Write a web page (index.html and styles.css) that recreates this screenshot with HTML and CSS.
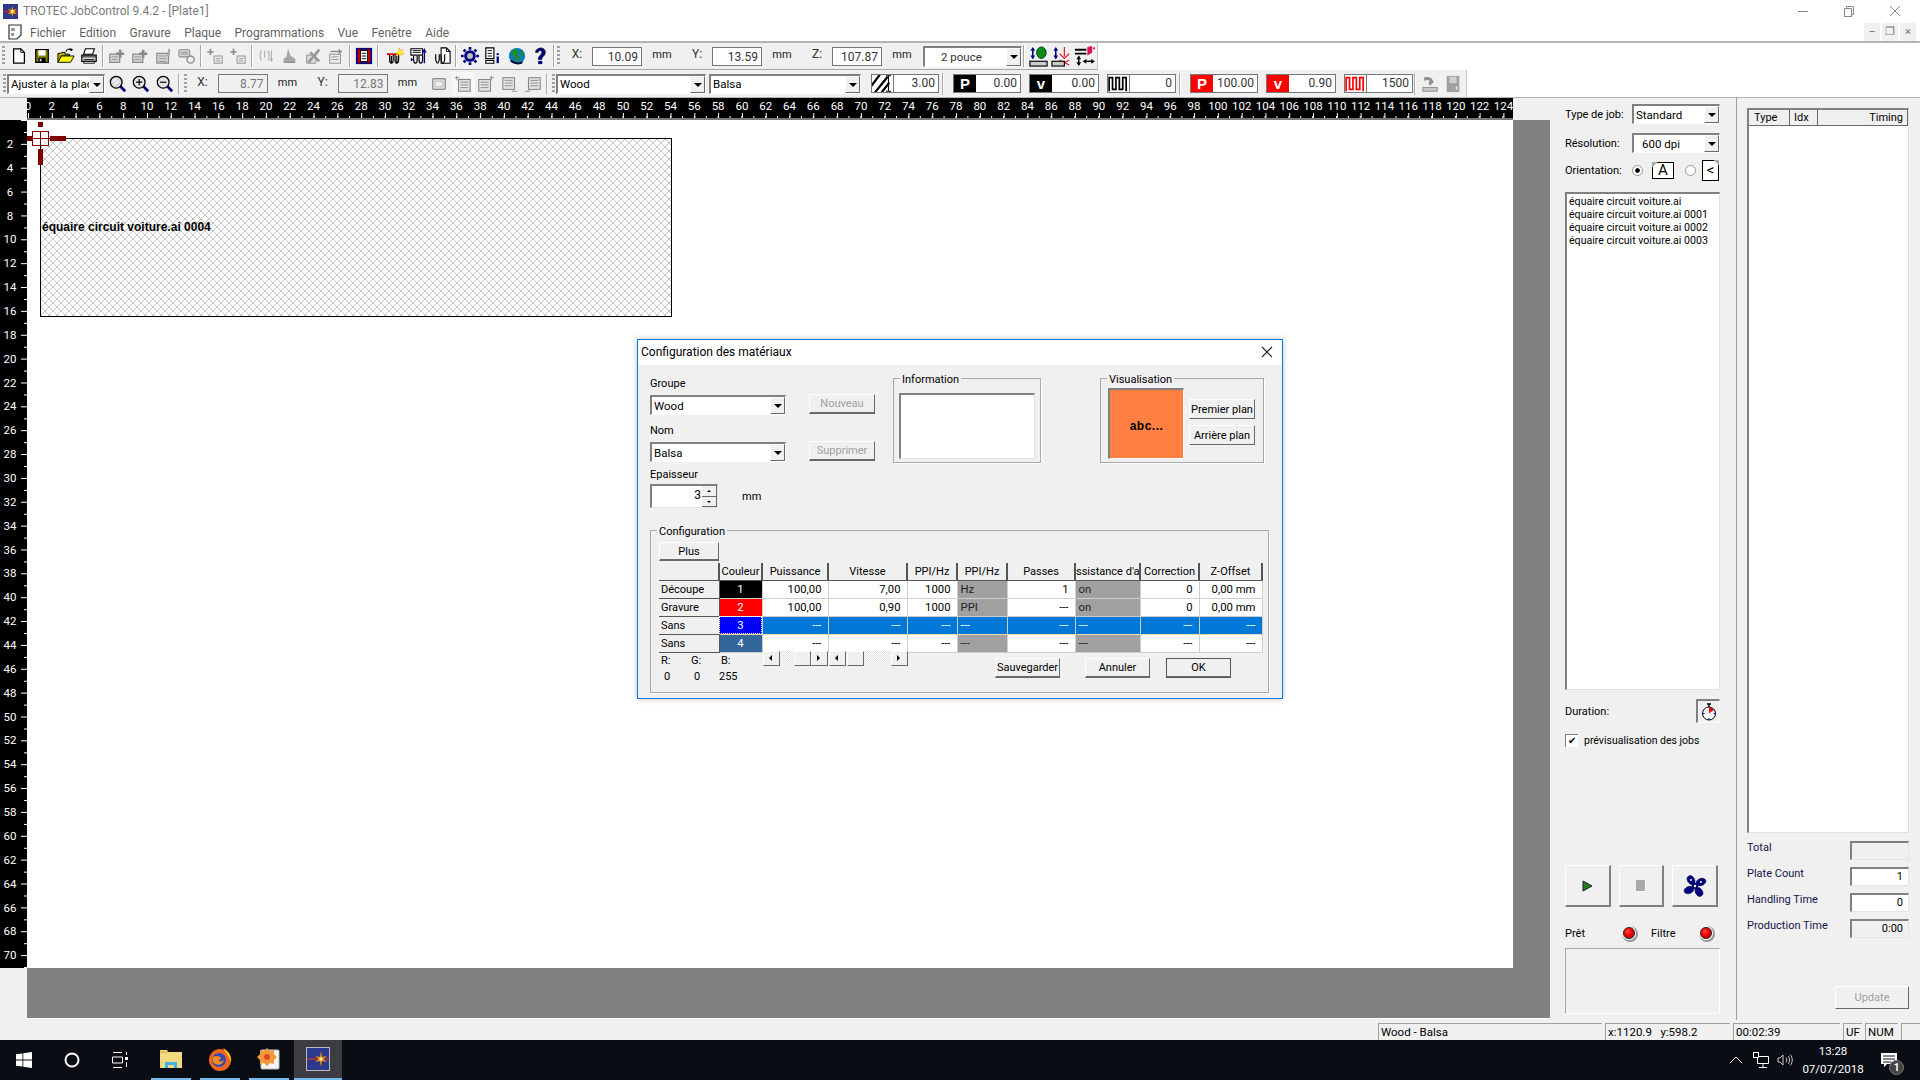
FILE: index.html
```html
<!DOCTYPE html>
<html lang="fr">
<head>
    <meta charset="UTF-8">
    <title>TROTEC JobControl 9.4.2 - [Plate1]</title>
    <link rel="stylesheet" href="styles.css">
</head>
<body>
<svg class="defs" width="0" height="0">
    <symbol id="app" viewBox="0 0 16 16"><rect width="16" height="16" fill="#2b3a8c"/><path d="M0 8h16" stroke="#c23" stroke-width="1.5"/><path d="M10 2l1 4 4-1-3 3 3 3-4-1-1 4-1-4-4 1 3-3-3-3 4 1z" fill="#f90"/><circle cx="10" cy="8" r="1.5" fill="#ff8"/></symbol>
    <symbol id="page" viewBox="0 0 20 20"><path d="M4 2h8l4 4v12H4z" fill="#fff" stroke="#000" stroke-width="1.4"/><path d="M12 2v4h4" fill="none" stroke="#000"/></symbol>
    <symbol id="save" viewBox="0 0 20 20"><path d="M3 3h14v14H3z" fill="#808000" stroke="#000" stroke-width="1.4"/><rect x="6" y="3.5" width="8" height="6" fill="#fff"/><rect x="6" y="12" width="8" height="5" fill="#000"/><rect x="7.5" y="13" width="2" height="3" fill="#ccc"/></symbol>
    <symbol id="open" viewBox="0 0 20 20"><path d="M1 17V7h3l1-1h4v2h5v2H5l-4 7z" fill="#c0a000" stroke="#000"/><path d="M1 17l4-7h14l-4 7z" fill="#ff0" stroke="#000"/><path d="M10 5c1-3 4-3 6-2" fill="none" stroke="#000" stroke-width="1.3"/><path d="M15 1l3 2-3 2z"/></symbol>
    <symbol id="print" viewBox="0 0 20 20"><path d="M6 2h10l-2 6H4z" fill="#fff" stroke="#000" stroke-width="1.2"/><path d="M2 9h16v7H2z" fill="#ddd" stroke="#000" stroke-width="1.3"/><path d="M2 11h16M4 14h12" stroke="#000"/><path d="M4 16h12v2H4z" fill="#fff" stroke="#000"/></symbol>
    <symbol id="doc-plus" viewBox="0 0 20 20"><path d="M2 8h11v9H2z" fill="#d8d8d8" stroke="#8a8a8a" stroke-width="1.4"/><path d="M4 11h7M4 14h7" stroke="#8a8a8a"/><path d="M12 3h3v3h3v3h-3v3h-3V9H9V6h3z" fill="#8a8a8a"/></symbol>
    <symbol id="doc-pen" viewBox="0 0 20 20"><path d="M2 7h13v11H2z" fill="#d8d8d8" stroke="#8a8a8a" stroke-width="1.3"/><path d="M4 10h9M4 13h9M4 16h9" stroke="#8a8a8a"/><path d="M15 1l2 2-1 7h-3z" fill="#a8a8a8"/></symbol>
    <symbol id="doc-ring" viewBox="0 0 20 20"><rect x="1" y="3" width="12" height="8" rx="2" fill="#d8d8d8" stroke="#8a8a8a" stroke-width="1.2"/><path d="M3 6h8M3 8h8" stroke="#8a8a8a"/><circle cx="14" cy="14" r="4" fill="#eee" stroke="#8a8a8a" stroke-width="1.4"/></symbol>
    <symbol id="add-list" viewBox="0 0 20 20"><path d="M5 2v7M1.500 5.500h7" stroke="#8a8a8a" stroke-width="1.800"/><rect x="9" y="10" width="9" height="8" fill="#eee" stroke="#8a8a8a"/><path d="M11 13h5M11 15.500h5" stroke="#8a8a8a"/></symbol>
    <symbol id="focus-off" viewBox="0 0 20 20"><path d="M5 4c-2 3-2 8 0 11M12 4c2 3 2 8 0 11M8.500 4v8M16 4v11" fill="none" stroke="#aaa" stroke-width="1.200"/><path d="M14 13l2 4 2-4z" fill="#aaa"/></symbol>
    <symbol id="weight" viewBox="0 0 20 20"><path d="M9 2l3 8 5 3v4H4v-4l3-2z" fill="#a8a8a8"/><path d="M4 17h13" stroke="#777"/></symbol>
    <symbol id="cross-doc" viewBox="0 0 20 20"><path d="M3 9h10v9H3z" fill="#ddd" stroke="#8a8a8a"/><path d="M5 17L17 3M7 6l10 10" stroke="#999" stroke-width="3"/></symbol>
    <symbol id="arrow-doc" viewBox="0 0 20 20"><rect x="3" y="8" width="12" height="10" fill="#eee" stroke="#8a8a8a"/><path d="M5 11h8M5 14h8" stroke="#8a8a8a"/><path d="M4 5h10" stroke="#8a8a8a" stroke-width="1.500"/><path d="M13 2l4 3-4 3z" fill="#8a8a8a"/></symbol>
    <symbol id="frame" viewBox="0 0 20 20"><rect x="1" y="1" width="18" height="18" fill="#000080"/><rect x="3" y="3" width="14" height="14" fill="#c00"/><rect x="6" y="4" width="8" height="12" fill="#fff" stroke="#000"/><path d="M7.500 7h5M7.500 10h5M7.500 13h5" stroke="#000"/></symbol>
    <symbol id="laser" viewBox="0 0 20 20"><path d="M1 8h13" stroke="#c00" stroke-width="2"/><path d="M4 9v5c0 2 1 4 2 4s2-2 2-4V9M6 10v8M10 9v5c0 2 1 4 2 4s2-2 2-4V9M12 10v8" fill="none" stroke="#000" stroke-width="1.300"/><path d="M15 1l1 3 3-1-2 3 3 2-4 0-1 3-1-3-3 0 3-3z" fill="#ff0" stroke="#f80" stroke-width=".5"/></symbol>
    <symbol id="laser-up" viewBox="0 0 20 20"><path d="M1 2h13v7H1z" fill="#fff" stroke="#000" stroke-width="1.200"/><path d="M3 4h9M3 6h9" stroke="#000"/><path d="M16 18V4" stroke="#008" stroke-width="1.500"/><path d="M13.500 6L16 1l2.500 5z" fill="#008"/><path d="M4 10v4c0 2 1 4 2 4s2-2 2-4v-4M10 10v4c0 2 1 4 2 4s2-2 2-4v-4" fill="none" stroke="#000" stroke-width="1.300"/><path d="M1 12l3 2-3 2z" fill="#008"/></symbol>
    <symbol id="laser-doc" viewBox="0 0 20 20"><path d="M9 1h6l4 4v13H9z" fill="#fff" stroke="#000" stroke-width="1.200"/><path d="M15 1v4h4" fill="none" stroke="#000"/><path d="M3 8v5c0 2 1 5 2 5s2-3 2-5V8M9 8v5c0 2 1 5 2 5s2-3 2-5V8" fill="none" stroke="#000" stroke-width="1.300"/></symbol>
    <symbol id="gear" viewBox="0 0 20 20"><circle cx="10" cy="10" r="6.500" fill="#000080"/><path d="M10 0v3M10 17v3M0 10h3M17 10h3M3 3l2 2M15 15l2 2M17 3l-2 2M5 15l-2 2" stroke="#000080" stroke-width="3"/><circle cx="10" cy="10" r="3.300" fill="#c0c0c0"/></symbol>
    <symbol id="pages-i" viewBox="0 0 20 20"><path d="M2 1h9v12H2z" fill="#fff" stroke="#000" stroke-width="1.300"/><path d="M4 4h5M4 7h5M4 10h5" stroke="#000"/><path d="M2 15h9v3H2z" fill="#fff" stroke="#000" stroke-width="1.200"/><rect x="14" y="7" width="2.500" height="2" fill="#008"/><rect x="14" y="10.500" width="2.500" height="7.500" fill="#008"/></symbol>
    <symbol id="globe" viewBox="0 0 20 20"><circle cx="10" cy="10" r="9" fill="#0a7cb8"/><path d="M4 5l5-3 3 3-2 4 3 3-2 6-3-4-1-4-3-1zM13 4l4 2 1 5-3-1z" fill="#1e8a2a"/><path d="M3 15c4 4 10 4 13 2" fill="none" stroke="#003" stroke-width="2"/></symbol>
    <symbol id="help" viewBox="0 0 20 20"><path d="M5 6c0-3 3-5 6-5s5 2 5 5c0 4-4 4-4 8H8c0-5 4-5 4-8 0-1-1-2-2-2s-2 1-2 2z" fill="#000080" stroke="#000" stroke-width=".6"/><rect x="8" y="15.500" width="4.500" height="3.500" fill="#000080"/></symbol>
    <symbol id="lens" viewBox="0 0 20 20"><path d="M12 12l6 6" stroke="#000080" stroke-width="3"/><circle cx="8" cy="8" r="6.500" fill="#d8d8d8" stroke="#000" stroke-width="1.400"/><path d="M4 8l4-4M6 11l5-5" stroke="#fff" stroke-width="1.200"/></symbol>
    <symbol id="lens-plus" viewBox="0 0 20 20"><path d="M12 12l6 6" stroke="#000080" stroke-width="3"/><circle cx="8" cy="8" r="6.500" fill="#e4e4e4" stroke="#000" stroke-width="1.400"/><path d="M4.500 8h7M8 4.500v7" stroke="#000" stroke-width="1.300"/></symbol>
    <symbol id="lens-minus" viewBox="0 0 20 20"><path d="M12 12l6 6" stroke="#000080" stroke-width="3"/><circle cx="8" cy="8" r="6.500" fill="#e4e4e4" stroke="#000" stroke-width="1.400"/><path d="M4.500 8h7" stroke="#000" stroke-width="1.300"/></symbol>
    <symbol id="box-dots" viewBox="0 0 20 20"><rect x="3" y="4" width="14" height="12" rx="1" fill="#ddd" stroke="#8a8a8a" stroke-width="1.300"/><rect x="6" y="7" width="8" height="6" fill="#eee" stroke="#999" stroke-dasharray="1 1"/></symbol>
    <symbol id="list-tl" viewBox="0 0 20 20"><rect x="5" y="5" width="13" height="13" fill="#e4e4e4" stroke="#8a8a8a" stroke-width="1.200"/><path d="M7 8h9M7 11h9M7 14h9" stroke="#8a8a8a"/><path d="M1 3h5M3 1v5" stroke="#8a8a8a"/></symbol>
    <symbol id="list-tr" viewBox="0 0 20 20"><rect x="2" y="5" width="13" height="13" fill="#e4e4e4" stroke="#8a8a8a" stroke-width="1.200"/><path d="M4 8h9M4 11h9M4 14h9" stroke="#8a8a8a"/><path d="M14 3h5M16 1v5" stroke="#8a8a8a"/></symbol>
    <symbol id="list-br" viewBox="0 0 20 20"><rect x="2" y="3" width="13" height="13" fill="#e4e4e4" stroke="#8a8a8a" stroke-width="1.200"/><path d="M4 6h9M4 9h9M4 12h9" stroke="#8a8a8a"/><path d="M12 18h6" stroke="#8a8a8a"/></symbol>
    <symbol id="list-bl" viewBox="0 0 20 20"><rect x="5" y="3" width="13" height="13" fill="#e4e4e4" stroke="#8a8a8a" stroke-width="1.200"/><path d="M7 6h9M7 9h9M7 12h9" stroke="#8a8a8a"/><path d="M1 18h6" stroke="#8a8a8a"/></symbol>
    <symbol id="z-green" viewBox="0 0 22 22"><path d="M5 2v11" stroke="#008" stroke-width="1.600"/><path d="M2.500 5L5 1l2.500 4zM2.500 10L5 14l2.500-4z" fill="#008"/><ellipse cx="14" cy="7" rx="5" ry="6" fill="#0a8a1a" stroke="#040"/><rect x="2" y="16" width="18" height="5" fill="#ccc" stroke="#000" stroke-width="1.200"/></symbol>
    <symbol id="z-laser" viewBox="0 0 22 22"><path d="M5 2v11" stroke="#008" stroke-width="1.600"/><path d="M2.500 5L5 1l2.500 4zM2.500 10L5 14l2.500-4z" fill="#008"/><path d="M14 1v10M9 8l5 5 5-5M9 15l10 5M19 15L9 20" stroke="#e01020" stroke-width="1.200" fill="none"/><rect x="1" y="16" width="13" height="5" fill="#ccc" stroke="#000" stroke-width="1.200"/></symbol>
    <symbol id="z-head" viewBox="0 0 22 22"><path d="M1 3h12v2H1zM1 7h12v2H1z"/><path d="M14 1l5-1v7l-5 3z" fill="#e01060"/><path d="M19 2l3-1v3z" fill="#e01060"/><path d="M5 11v9" stroke="#000" stroke-width="1.500"/><path d="M2.500 14L5 10l2.500 4zM2.500 17L5 21l2.500-4z"/><path d="M11 16h9" stroke="#000" stroke-width="1.500"/><path d="M13 13.500L9 16l4 2.500zM18 13.500l4 2.500-4 2.500z"/></symbol>
    <symbol id="hatch" viewBox="0 0 24 20"><rect width="16" height="20" fill="#fff"/><path d="M-2 14L10-2M2 22L18 2M9 23L20 9" stroke="#000" stroke-width="2.600"/><path d="M19 1v18M16 1h6M16 19h6" stroke="#000" stroke-width="1.200"/></symbol>
    <symbol id="pulse" viewBox="0 0 24 20"><path d="M1 19V3h4v14h4V3h4v14h4V3h4v16" fill="none" stroke="currentColor" stroke-width="2"/></symbol>
    <symbol id="undo-gr" viewBox="0 0 20 20"><path d="M3 3c5-2 10 0 11 5l-4 4-2-4 2-1c-2-2-4-2-6 0z" fill="#909090"/><rect x="2" y="14" width="16" height="4" fill="#c8c8c8" stroke="#888"/></symbol>
    <symbol id="disk-gr" viewBox="0 0 20 20"><path d="M3 1h14v18H3z" fill="#a0a0a0"/><rect x="6" y="2" width="8" height="7" fill="#d0d0d0"/><rect x="13" y="13" width="2" height="3" fill="#eee"/></symbol>
</svg>

<div class="titlebar">
    <svg class="app-icon"><use href="#app"/></svg>
    <span class="title-text">TROTEC JobControl 9.4.2 - [Plate1]</span>
    <div class="win-btns">
        <svg width="46" height="20" viewBox="0 0 46 20"><path d="M18 10.500h10" stroke="#888"/></svg>
        <svg width="46" height="20" viewBox="0 0 46 20"><path d="M18.500 7.500h7v8h-7zM20.500 7.500v-2h7v8h-2" fill="none" stroke="#888"/></svg>
        <svg width="46" height="20" viewBox="0 0 46 20"><path d="M18 5l10 10M28 5L18 15" stroke="#888"/></svg>
    </div>
</div>

<div class="menubar">
    <svg class="menu-doc" viewBox="0 0 16 16"><path d="M2 1h12v10l-4 4H2z" fill="#fff" stroke="#333" stroke-width="1.200"/><path d="M4 4h4v3H4zM9 8h3M4 9h3v3H4z" fill="#999"/></svg>
    <div class="menu-items">
        <span>Fichier</span><span>Edition</span><span>Gravure</span><span>Plaque</span><span>Programmations</span><span>Vue</span><span>Fenêtre</span><span>Aide</span>
    </div>
    <div class="mdi-btns">
        <span class="mdi">&#8211;</span><span class="mdi">&#10064;</span><span class="mdi">&#215;</span>
    </div>
</div>

<div class="toolbars">
    <div class="tb tb-one">
        <span class="grip"></span>
        <span class="tbtn"><svg><use href="#page"/></svg></span>
        <span class="tbtn"><svg><use href="#save"/></svg></span>
        <span class="tbtn"><svg><use href="#open"/></svg></span>
        <span class="tbtn"><svg><use href="#print"/></svg></span>
        <span class="sep"></span>
        <span class="tbtn"><svg><use href="#doc-plus"/></svg></span>
        <span class="tbtn"><svg><use href="#doc-plus"/></svg></span>
        <span class="tbtn"><svg><use href="#doc-pen"/></svg></span>
        <span class="tbtn"><svg><use href="#doc-ring"/></svg></span>
        <span class="sep"></span>
        <span class="tbtn"><svg><use href="#add-list"/></svg></span>
        <span class="tbtn"><svg><use href="#add-list"/></svg></span>
        <span class="sep"></span>
        <span class="tbtn"><svg><use href="#focus-off"/></svg></span>
        <span class="tbtn"><svg><use href="#weight"/></svg></span>
        <span class="tbtn"><svg><use href="#cross-doc"/></svg></span>
        <span class="tbtn"><svg><use href="#arrow-doc"/></svg></span>
        <span class="sep"></span>
        <span class="tbtn"><svg><use href="#frame"/></svg></span>
        <span class="sep sep-frame"></span>
        <span class="tbtn"><svg><use href="#laser"/></svg></span>
        <span class="tbtn"><svg><use href="#laser-up"/></svg></span>
        <span class="tbtn"><svg><use href="#laser-doc"/></svg></span>
        <span class="sep"></span>
        <span class="tbtn"><svg><use href="#gear"/></svg></span>
        <span class="tbtn"><svg><use href="#pages-i"/></svg></span>
        <span class="tbtn"><svg><use href="#globe"/></svg></span>
        <span class="tbtn"><svg><use href="#help"/></svg></span>
        <span class="sep"></span>
        <span class="grip grip-mid"></span>
        <span class="lbl">X:</span><span class="field">10.09</span><span class="unit">mm</span>
        <span class="lbl">Y:</span><span class="field">13.59</span><span class="unit">mm</span>
        <span class="lbl">Z:</span><span class="field">107.87</span><span class="unit">mm</span>
        <div class="combo combo-pouce"><span class="combo-text">2 pouce</span><span class="arrow"></span></div>
        <span class="sep sep-wide"></span>
        <span class="tbtn tbtn-z"><svg><use href="#z-green"/></svg></span>
        <span class="tbtn tbtn-z"><svg><use href="#z-laser"/></svg></span>
        <span class="tbtn tbtn-z"><svg><use href="#z-head"/></svg></span>
    </div>
    <div class="tb tb-two">
        <span class="grip"></span>
        <div class="combo combo-fit"><span class="combo-text">Ajuster à la plac</span><span class="arrow"></span></div>
        <span class="tbtn"><svg><use href="#lens"/></svg></span>
        <span class="tbtn"><svg><use href="#lens-plus"/></svg></span>
        <span class="tbtn"><svg><use href="#lens-minus"/></svg></span>
        <span class="sep"></span>
        <span class="grip grip-mid"></span>
        <span class="lbl">X:</span><span class="field field-off">8.77</span><span class="unit">mm</span>
        <span class="lbl">Y:</span><span class="field field-off">12.83</span><span class="unit">mm</span>
        <span class="tbtn"><svg><use href="#box-dots"/></svg></span>
        <span class="tbtn tbtn-on"><svg><use href="#list-tl"/></svg></span>
        <span class="tbtn"><svg><use href="#list-tr"/></svg></span>
        <span class="tbtn"><svg><use href="#list-br"/></svg></span>
        <span class="tbtn"><svg><use href="#list-bl"/></svg></span>
        <span class="sep"></span>
        <span class="grip"></span>
        <div class="combo combo-mat"><span class="combo-text">Wood</span><span class="arrow"></span></div>
        <div class="combo combo-mat combo-balsa"><span class="combo-text">Balsa</span><span class="arrow"></span></div>
        <div class="param param-hatch"><span class="param-ico ico-plain"><svg><use href="#hatch"/></svg></span><span class="param-val">3.00</span></div>
        <span class="sep sep-param"></span>
        <div class="param param-p"><span class="param-ico ico-black">P</span><span class="param-val">0.00</span></div>
        <div class="param param-v"><span class="param-ico ico-black">v</span><span class="param-val">0.00</span></div>
        <div class="param param-f"><span class="param-ico ico-plain"><svg><use href="#pulse"/></svg></span><span class="param-val">0</span></div>
        <span class="sep sep-param"></span>
        <div class="param param-p2"><span class="param-ico ico-red">P</span><span class="param-val">100.00</span></div>
        <div class="param param-v"><span class="param-ico ico-red">v</span><span class="param-val">0.90</span></div>
        <div class="param param-f"><span class="param-ico ico-plain ico-redline"><svg><use href="#pulse"/></svg></span><span class="param-val">1500</span></div>
        <span class="sep"></span>
        <span class="tbtn tbtn-end"><svg><use href="#undo-gr"/></svg></span>
        <span class="tbtn"><svg><use href="#disk-gr"/></svg></span>
    </div>
</div>

<div class="workspace">
    <div class="drawing">
        <div class="ruler-row">
            <div class="ruler-top">
                <span>0</span><span>2</span><span>4</span><span>6</span><span>8</span><span>10</span><span>12</span><span>14</span><span>16</span><span>18</span><span>20</span><span>22</span><span>24</span><span>26</span><span>28</span><span>30</span><span>32</span><span>34</span><span>36</span><span>38</span><span>40</span><span>42</span><span>44</span><span>46</span><span>48</span><span>50</span><span>52</span><span>54</span><span>56</span><span>58</span><span>60</span><span>62</span><span>64</span><span>66</span><span>68</span><span>70</span><span>72</span><span>74</span><span>76</span><span>78</span><span>80</span><span>82</span><span>84</span><span>86</span><span>88</span><span>90</span><span>92</span><span>94</span><span>96</span><span>98</span><span>100</span><span>102</span><span>104</span><span>106</span><span>108</span><span>110</span><span>112</span><span>114</span><span>116</span><span>118</span><span>120</span><span>122</span><span>124</span>
            </div>
        </div>
        <div class="canvas-row">
            <div class="ruler-side">
                <div class="ruler-left">
                    <span>2</span><span>4</span><span>6</span><span>8</span><span>10</span><span>12</span><span>14</span><span>16</span><span>18</span><span>20</span><span>22</span><span>24</span><span>26</span><span>28</span><span>30</span><span>32</span><span>34</span><span>36</span><span>38</span><span>40</span><span>42</span><span>44</span><span>46</span><span>48</span><span>50</span><span>52</span><span>54</span><span>56</span><span>58</span><span>60</span><span>62</span><span>64</span><span>66</span><span>68</span><span>70</span>
                </div>
            </div>
            <div class="grey-area">
                <div class="canvas">
                    <div class="plate"><span class="plate-name">équaire circuit voiture.ai 0004</span></div>
                    <svg class="cross" width="50" height="50" viewBox="0 0 50 50">
                        <path d="M13.500 0v5M13.500 27v16M0 16.500h5M23 16.500h16" stroke="#800000" stroke-width="5"/>
                        <rect x="5.500" y="9.500" width="16" height="14" fill="#fff" fill-opacity=".6" stroke="#800000"/>
                        <path d="M13.500 9.500v14M5.500 16.500h16" stroke="#800000"/>
                    </svg>
                </div>
            </div>
        </div>
    </div>

    <div class="job-panel">
        <div class="job-row job-row-first"><span class="job-lbl">Type de job:</span><div class="combo combo-job"><span class="combo-text">Standard</span><span class="arrow"></span></div></div>
        <div class="job-row job-row-res"><span class="job-lbl">Résolution:</span><div class="combo combo-job"><span class="combo-text combo-indent">600 dpi</span><span class="arrow"></span></div></div>
        <div class="job-row job-row-orient">
            <span class="job-lbl job-lbl-o">Orientation:</span>
            <span class="radio radio-on"></span>
            <span class="orient orient-land">A</span>
            <span class="radio radio-off"></span>
            <span class="orient orient-port">&#60;</span>
        </div>
        <div class="job-list">
            <div>équaire circuit voiture.ai</div>
            <div>équaire circuit voiture.ai 0001</div>
            <div>équaire circuit voiture.ai 0002</div>
            <div>équaire circuit voiture.ai 0003</div>
        </div>
        <div class="duration">
            <span>Duration:</span>
            <span class="timer-btn">
                <svg width="18" height="18" viewBox="0 0 18 18"><circle cx="9" cy="10.500" r="6.500" fill="#fff" stroke="#000"/><path d="M9 10.500V4a6.500 6.500 0 0 1 5 3z" fill="#e01010"/><path d="M7 1h4M9 1v3" stroke="#000" stroke-width="1.300"/><path d="M2.500 10.500h2M13.500 10.500h2M9 15v2" stroke="#00c"/></svg>
            </span>
        </div>
        <label class="preview-check"><span class="checkbox">&#10004;</span><span>prévisualisation des jobs</span></label>
        <div class="run-btns">
            <span class="run-btn"><svg width="14" height="14" viewBox="0 0 14 14"><path d="M2 2l9 5-9 5z" fill="#1d7a1d" stroke="#222"/></svg></span>
            <span class="run-btn run-btn-stop"><svg width="14" height="14" viewBox="0 0 14 14"><rect x="3" y="2" width="9" height="11" fill="#fff"/><rect x="2" y="1" width="9" height="11" fill="#a8a8a8"/></svg></span>
            <span class="run-btn"><svg width="24" height="24" viewBox="0 0 24 24"><g fill="#000080" stroke="#000040" stroke-width=".6"><circle cx="12" cy="12" r="3"/><ellipse cx="8" cy="6" rx="4.500" ry="3.500" transform="rotate(60 8 6)"/><ellipse cx="18" cy="8" rx="5" ry="3.500" transform="rotate(-20 18 8)"/><ellipse cx="16" cy="18" rx="4.500" ry="3.500" transform="rotate(60 16 18)"/><ellipse cx="6" cy="16" rx="5" ry="3.500" transform="rotate(-20 6 16)"/></g><circle cx="12" cy="12" r="1.200" fill="#fff"/><circle cx="8" cy="6" r="1" fill="#fff"/><circle cx="18" cy="8" r="1" fill="#fff"/></svg></span>
        </div>
        <div class="led-row">
            <span class="led-lbl">Prêt</span><span class="led"></span>
            <span class="led-lbl led-lbl-filter">Filtre</span><span class="led led-filter"></span>
        </div>
        <div class="msg-box"></div>
    </div>

    <div class="queue-panel">
        <div class="queue-list">
            <div class="queue-head"><span class="qh qh-type">Type</span><span class="qh qh-idx">Idx</span><span class="qh qh-time">Timing</span></div>
        </div>
        <div class="stat stat-first"><span>Total</span><span class="stat-box stat-off"></span></div>
        <div class="stat"><span>Plate Count</span><span class="stat-box">1</span></div>
        <div class="stat"><span>Handling Time</span><span class="stat-box">0</span></div>
        <div class="stat"><span>Production Time</span><span class="stat-box stat-off">0:00</span></div>
        <span class="btn btn-off btn-update">Update</span>
    </div>
</div>

<div class="statusbar">
    <span class="st st-mat">Wood - Balsa</span>
    <span class="st st-pos">x:1120.9 &nbsp; y:598.2</span>
    <span class="st st-time">00:02:39</span>
    <span class="st st-uf">UF</span>
    <span class="st st-num">NUM</span>
    <span class="st st-end"></span>
</div>

<div class="taskbar">
    <span class="task task-plain"><svg width="16" height="16" viewBox="0 0 16 16"><path d="M0 2.300l6.500-.9v6.200H0zM7.300 1.300L16 0v7.600H7.300zM0 8.400h6.500v6.200L0 13.700zM7.300 8.400H16V16l-8.700-1.200z" fill="#fff"/></svg></span>
    <span class="task task-plain"><svg width="16" height="16" viewBox="0 0 16 16"><circle cx="8" cy="8" r="6.500" fill="none" stroke="#fff" stroke-width="2"/></svg></span>
    <span class="task task-plain"><svg width="16" height="16" viewBox="0 0 16 16"><path d="M1 .5h9M1 15.500h9M.500 5h10v6H.500z" fill="none" stroke="#fff"/><rect x="13" y="5" width="3" height="3" fill="#fff"/><path d="M14.500 0v3M14.500 10v5" stroke="#fff"/></svg></span>
    <span class="task task-run task-first"><svg width="24" height="20" viewBox="0 0 24 20"><path d="M1 1h7l1 2h14v16H1z" fill="#f3d980"/><path d="M1 3h8" stroke="#d0a840"/><path d="M6 19v-6h12v6h-3v-3H9v3z" fill="#3db3e8"/></svg></span>
    <span class="task task-run"><svg width="24" height="24" viewBox="0 0 24 24"><circle cx="12" cy="13" r="11" fill="#f0651d"/><circle cx="11" cy="13" r="7" fill="#3a4ab0"/><path d="M15 1c6 3 9 9 8 14-2-6-5-9-8-14z" fill="#ffc51e"/><path d="M5 10c3-2 8-1 8 2-2 0-3 1-2 2 2 1 4 0 5-1-1 5-7 6-10 3-2-2-2-4-1-6z" fill="#f58a1f"/></svg></span>
    <span class="task task-run"><svg width="24" height="24" viewBox="0 0 24 24"><rect x="4" y="3" width="18" height="19" rx="1" fill="#f4f4f4" stroke="#bbb"/><path d="M10 1l3 3 4-1 0 4 3 3-3 3 0 4-4-1-3 3-3-3-4 1 0-4-3-3 3-3 0-4 4 1z" fill="#f29a3a"/><circle cx="10" cy="10" r="3" fill="#e8452c"/></svg></span>
    <span class="task task-run task-active"><svg width="24" height="24" viewBox="0 0 24 24"><rect x="0.500" y="0.500" width="23" height="23" fill="#2b3a8c" stroke="#bbb"/><path d="M1 12h22" stroke="#b33" stroke-width="1.500"/><path d="M15 4l1 6 5-1-4 3 4 3-5-1-1 6-1-6-5 1 4-3-4-3 5 1z" fill="#f90"/><circle cx="15" cy="12" r="1.500" fill="#ffd"/></svg></span>
    <div class="tray">
        <svg width="14" height="10" viewBox="0 0 14 10"><path d="M1 8l6-6 6 6" fill="none" stroke="#fff"/></svg>
        <svg class="tray-net" width="16" height="16" viewBox="0 0 16 16"><path d="M4.500 4.500h11v7h-11zM10 11.500V15M6 15.500h8" fill="none" stroke="#fff"/><rect x="0.500" y="0.500" width="5" height="5" fill="#0a0e13" stroke="#fff"/></svg>
        <svg class="tray-vol" width="16" height="16" viewBox="0 0 16 16"><path d="M1 6h2l3-3v10l-3-3H1z" fill="none" stroke="#ccc"/><path d="M9 5.500c1 1.500 1 3.500 0 5M11 4c2 2 2 6 0 8M13 2.500c3 3 3 8 0 11" fill="none" stroke="#ccc"/></svg>
        <div class="clock"><span>13:28</span><span>07/07/2018</span></div>
        <span class="notif"><svg width="17" height="15" viewBox="0 0 17 15"><path d="M0 0h16v11H6l-3 3v-3H0z" fill="#fff"/><path d="M2 3h12M2 6h12M2 9h8" stroke="#0a0e13"/></svg><span class="notif-count">1</span></span>
    </div>
</div>

<div class="dialog">
    <div class="dlg-title">
        <span>Configuration des matériaux</span>
        <svg width="12" height="12" viewBox="0 0 12 12"><path d="M1 1l10 10M11 1L1 11" stroke="#222" stroke-width="1.100"/></svg>
    </div>
    <div class="dlg-top">
        <div class="dlg-col-fields">
            <span class="f-label">Groupe</span>
            <div class="combo combo-dlg"><span class="combo-text">Wood</span><span class="arrow"></span></div>
            <span class="f-label f-label-nom">Nom</span>
            <div class="combo combo-dlg"><span class="combo-text">Balsa</span><span class="arrow"></span></div>
            <span class="f-label f-label-ep">Epaisseur</span>
            <div class="thick-row">
                <div class="spinner"><span class="spin-val">3</span><span class="spin-btns"><span class="spin-up"></span><span class="spin-down"></span></span></div>
                <span>mm</span>
            </div>
        </div>
        <div class="dlg-col-btns">
            <span class="btn btn-off btn-side">Nouveau</span>
            <span class="btn btn-off btn-side btn-del">Supprimer</span>
        </div>
        <div class="group group-info">
            <span class="legend">Information</span>
            <div class="info-box"></div>
        </div>
        <div class="group group-vis">
            <span class="legend">Visualisation</span>
            <div class="vis-swatch">abc...</div>
            <div class="vis-btns">
                <span class="btn btn-vis">Premier plan</span>
                <span class="btn btn-vis">Arrière plan</span>
            </div>
        </div>
    </div>
    <div class="group group-config">
        <span class="legend">Configuration</span>
        <span class="btn btn-plus">Plus</span>
        <table class="grid">
            <colgroup>
                <col class="c-fix"><col class="c-col"><col class="c-pow"><col class="c-spd"><col class="c-ppi"><col class="c-ppi"><col class="c-pas"><col class="c-air"><col class="c-cor"><col class="c-zof">
            </colgroup>
            <thead>
                <tr><th></th><th>Couleur</th><th>Puissance</th><th>Vitesse</th><th>PPI/Hz</th><th>PPI/Hz</th><th>Passes</th><th class="th-clip">ssistance d'a</th><th>Correction</th><th>Z-Offset</th></tr>
            </thead>
            <tbody>
                <tr><th class="rh">Découpe</th><td class="swatch sw-black">1</td><td>100,00</td><td>7,00</td><td>1000</td><td class="off">Hz</td><td>1</td><td class="off">on</td><td>0</td><td>0,00 mm</td></tr>
                <tr><th class="rh">Gravure</th><td class="swatch sw-red">2</td><td>100,00</td><td>0,90</td><td>1000</td><td class="off">PPI</td><td>---</td><td class="off">on</td><td>0</td><td>0,00 mm</td></tr>
                <tr class="sel"><th class="rh rh-sel">Sans</th><td class="swatch sw-blue">3</td><td>---</td><td>---</td><td>---</td><td class="left">---</td><td>---</td><td class="left">---</td><td>---</td><td>---</td></tr>
                <tr><th class="rh rh-sel">Sans</th><td class="swatch sw-steel">4</td><td>---</td><td>---</td><td>---</td><td class="off">---</td><td>---</td><td class="off">---</td><td>---</td><td>---</td></tr>
            </tbody>
        </table>
        <div class="cfg-bottom">
            <div class="rgb">
                <span>R:</span><span>G:</span><span>B:</span>
                <span class="rgb-val">0</span><span class="rgb-val">0</span><span class="rgb-b">255</span>
            </div>
            <div class="scrolls">
                <div class="hscroll hscroll-a"><span class="sb-btn sb-left"></span><span class="sb-track sb-a1"></span><span class="sb-thumb"></span><span class="sb-btn sb-right"></span></div>
                <div class="hscroll hscroll-b"><span class="sb-btn sb-left"></span><span class="sb-thumb"></span><span class="sb-track sb-b1"></span><span class="sb-btn sb-right"></span></div>
            </div>
            <div class="dlg-actions">
                <span class="btn btn-act">Sauvegarder</span>
                <span class="btn btn-act">Annuler</span>
                <span class="btn btn-act btn-default">OK</span>
            </div>
        </div>
    </div>
</div>
</body>
</html>
```

FILE: styles.css
```css
* {
    box-sizing: border-box;
}
html, body {
    margin: 0;
    width: 1920px;
    height: 1080px;
    overflow: hidden;
}
body {
    position: relative;
    display: flex;
    flex-direction: column;
    font-family: Roboto, "Liberation Sans", sans-serif;
    font-size: 11px;
    color: #000;
    background: #f0f0f0;
}
.defs {
    position: absolute;
}
svg {
    display: block;
    flex: none;
}

/* title and menu */
.titlebar {
    height: 22px;
    flex: none;
    display: flex;
    align-items: center;
    background: #fff;
}
.app-icon {
    width: 15px;
    height: 15px;
    margin-left: 3px;
}
.title-text {
    margin-left: 5px;
    font-size: 12px;
    color: #7a7a7a;
}
.win-btns {
    margin-left: auto;
    margin-right: 2px;
    display: flex;
}
.menubar {
    height: 21px;
    flex: none;
    display: flex;
    align-items: center;
    background: #fff;
    border-bottom: 2px solid #b4b4b4;
}
.menu-doc {
    width: 16px;
    height: 16px;
    margin-left: 7px;
}
.menu-items {
    margin-left: 7px;
    margin-top: 2px;
    display: flex;
    gap: 13.500px;
    font-size: 12px;
    color: #5f5f5f;
}
.mdi-btns {
    margin-left: auto;
    margin-right: 4px;
    display: flex;
    height: 18px;
}
.mdi {
    width: 16px;
    margin-left: 2px;
    background: #f0f0f0;
    color: #777;
    font-size: 11px;
    line-height: 18px;
    text-align: center;
}

/* toolbars */
.toolbars {
    height: 55px;
    flex: none;
    background: #fff;
    border-bottom: 1px solid #b4b4b4;
}
.tb {
    height: 27px;
    display: flex;
    align-items: center;
    background: #f0f0f0;
    border-bottom: 1px solid #a8a8a8;
}
.tb-one {
    width: 1098px;
    border-right: 1px solid #c8c8c8;
}
.tb-two {
    width: 1467px;
    height: 27px;
    border-right: 1px solid #c8c8c8;
    border-bottom: 0;
}
.grip {
    flex: none;
    width: 3px;
    height: 20px;
    margin: 0 2px 0 2px;
    background: repeating-linear-gradient(#a0a0a0 0 2px, transparent 2px 4px);
}
.tb-one .grip-mid {
    margin: 0 2px 0 1px;
}
.tb-two .grip {
    margin: 0 1px 0 3px;
}
.tb-two .grip-mid {
    margin: 0 1px 0 3px;
}
.tbtn {
    flex: none;
    width: 23.500px;
    height: 24px;
    display: flex;
    align-items: center;
    justify-content: center;
}
.tbtn svg {
    width: 18px;
    height: 18px;
}
.tbtn-z {
    width: 23px;
}
.tbtn-z svg {
    width: 21px;
    height: 21px;
}
.tbtn-on {
    background: repeating-conic-gradient(#f0f0f0 0 25%, #fff 0 50%) 0 0 / 2px 2px;
}
.tbtn-end {
    margin-left: 1px;
}
.sep {
    flex: none;
    width: 4px;
    height: 22px;
    display: block;
    background: linear-gradient(90deg, transparent 1px, #a8a8a8 1px 2px, #fff 2px 3px, transparent 3px);
}
.sep-frame {
    margin-right: 4px;
}
.sep-wide {
    margin-left: 0;
    margin-right: 1px;
}
.sep-param {
    margin: 0 8px 0 2px;
}
.lbl {
    flex: none;
    width: 30px;
    text-align: center;
    font-size: 12px;
    color: #333;
    margin-top: -4px;
}
.unit {
    flex: none;
    width: 40px;
    text-align: center;
    margin-top: -3px;
    color: #222;
}
.field {
    flex: none;
    width: 50px;
    height: 19px;
    padding-right: 3px;
    line-height: 18px;
    font-size: 12px;
    text-align: right;
    color: #333;
    background: #fff;
    border: 1px solid #777;
}
.field-off {
    background: #f0f0f0;
    color: #777;
}

/* sunken combo box */
.combo {
    flex: none;
    display: flex;
    align-items: center;
    height: 20px;
    background: #fff;
    border-top: 2px solid #808080;
    border-left: 2px solid #808080;
    border-right: 1px solid #fff;
    border-bottom: 1px solid #fff;
}
.combo-text {
    flex: 1;
    min-width: 0;
    padding-left: 2px;
    overflow: hidden;
    white-space: nowrap;
    font-size: 11.500px;
}
.combo-indent {
    padding-left: 8px;
}
.arrow {
    flex: none;
    position: relative;
    width: 15px;
    height: 100%;
    background: #f0f0f0;
    border-right: 1px solid #696969;
    border-bottom: 1px solid #696969;
    border-top: 1px solid #fff;
    border-left: 1px solid #fff;
}
.arrow::after {
    content: "";
    position: absolute;
    left: 3px;
    top: 6px;
    border: 4px solid transparent;
    border-top: 4px solid #000;
    border-bottom: 0;
}
.combo-fit {
    width: 98px;
    height: 20px;
    margin-right: 1px;
}
.combo-pouce {
    width: 99px;
    height: 21px;
    margin-left: 1px;
}
.combo-pouce .combo-text {
    padding-left: 16px;
    color: #333;
}
.combo-mat {
    width: 150px;
}
.combo-balsa {
    width: 152px;
    margin-left: 3px;
    margin-right: 10px;
}

/* parameter boxes in the second toolbar */
.param {
    flex: none;
    display: flex;
    height: 19px;
    background: #fff;
    border: 1px solid #777;
}
.param-hatch {
    width: 68px;
}
.param-p {
    width: 68px;
}
.param-p2 {
    width: 68px;
}
.param-v {
    width: 70px;
    margin-left: 8px;
}
.param-f {
    width: 69px;
    margin-left: 8px;
}
.param-ico {
    flex: none;
    width: 22px;
    display: flex;
    align-items: center;
    justify-content: center;
    font: bold 15px/17px "Liberation Sans", sans-serif;
    color: #fff;
}
.param-ico svg {
    width: 21px;
    height: 17px;
}
.ico-black {
    background: #000;
}
.ico-red {
    background: #f00;
}
.ico-plain {
    color: #000;
    background: #fff;
    border-right: 1px solid #777;
}
.ico-redline {
    color: #f00;
}
.param-val {
    flex: 1;
    padding-right: 3px;
    text-align: right;
    line-height: 17px;
    font-size: 12px;
    color: #333;
}

/* main area */
.workspace {
    height: 922px;
    flex: none;
    display: flex;
}
.drawing {
    width: 1550px;
    flex: none;
    display: flex;
    flex-direction: column;
}
.ruler-row {
    height: 22px;
    flex: none;
    padding-left: 27px;
    padding-right: 37px;
}
.ruler-top {
    height: 22px;
    display: flex;
    overflow: hidden;
    color: #fff;
    background:
        linear-gradient(90deg, #fff 1px, transparent 1px) 1px 15px / 23.800px 6px repeat-x,
        linear-gradient(90deg, #fff 1px, transparent 1px) 1px 18px / 11.900px 3px repeat-x,
        #000;
    border-bottom: 2px solid #777;
}
.ruler-top span {
    flex: none;
    width: 23.800px;
    text-align: center;
    font-size: 11.500px;
    line-height: 16px;
}
.ruler-top span:first-child {
    margin-left: -10.900px;
}
.canvas-row {
    flex: 1;
    display: flex;
    min-height: 0;
}
.ruler-side {
    width: 27px;
    flex: none;
}
.ruler-left {
    height: 848px;
    padding-top: 12px;
    overflow: hidden;
    color: #fff;
    background:
        linear-gradient(#fff 1px, transparent 1px) 21px 0 / 6px 23.860px repeat-y,
        linear-gradient(#fff 1px, transparent 1px) 24px 12px / 3px 23.860px repeat-y,
        #000;
}
.ruler-left span {
    display: block;
    width: 20px;
    height: 23.860px;
    text-align: center;
    font-size: 11.500px;
    line-height: 24px;
}
.grey-area {
    flex: 1;
    height: 899px;
    background: #808080;
    border-bottom: 1px solid #fff;
}
.canvas {
    position: relative;
    width: 1486px;
    height: 848px;
    background: #fff;
}
.plate {
    position: absolute;
    left: 13px;
    top: 18px;
    width: 632px;
    height: 179px;
    padding-bottom: 2px;
    border: 1px solid #000;
    background:
        linear-gradient(45deg, transparent 45%, #c4c4c4 45% 55%, transparent 55%) 0 0 / 8px 8px,
        linear-gradient(-45deg, transparent 45%, #c4c4c4 45% 55%, transparent 55%) 0 0 / 8px 8px,
        #fff;
    display: flex;
    align-items: center;
}
.plate-name {
    font: bold 12px "Liberation Sans", sans-serif;
    margin-left: 1px;
}
.cross {
    position: absolute;
    left: 0;
    top: 2px;
}

/* job panel */
.job-panel {
    width: 187px;
    flex: none;
    display: flex;
    flex-direction: column;
    padding-left: 15px;
    padding-right: 16px;
    background: #f0f0f0;
    border-right: 1px solid #a0a0a0;
    font-size: 11px;
}
.job-row {
    display: flex;
    align-items: center;
}
.job-row-first {
    margin-top: 6px;
}
.job-row-res {
    margin-top: 9px;
}
.job-row-orient {
    margin-top: 6px;
    height: 22px;
}
.job-lbl {
    width: 67px;
    flex: none;
}
.combo-job {
    width: 88px;
}
.radio {
    flex: none;
    width: 11px;
    height: 11px;
    border-radius: 50%;
    background: #fff;
    border: 1px solid #999;
}
.radio-on {
    background: radial-gradient(circle, #000 0 2px, #fff 2.500px);
}
.radio-off {
    margin-left: 11px;
}
.orient {
    position: relative;
    flex: none;
    display: flex;
    align-items: center;
    justify-content: center;
    background: #fff;
    border: 1px solid #000;
    font-size: 15px;
}
.orient::before {
    content: "";
    position: absolute;
    top: -1px;
    width: 6px;
    height: 6px;
    background: #a8a8a8;
}
.orient-land {
    width: 22px;
    height: 17px;
    margin-left: 9px;
}
.orient-land::before {
    left: -1px;
    clip-path: polygon(0 0, 100% 0, 0 100%);
}
.orient-port {
    width: 17px;
    height: 21px;
    margin-left: 6px;
}
.orient-port::before {
    right: -1px;
    clip-path: polygon(0 0, 100% 0, 100% 100%);
}
.job-list {
    height: 498px;
    margin-top: 11px;
    padding: 1px 2px;
    background: #fff;
    border-top: 2px solid #808080;
    border-left: 2px solid #808080;
    border-right: 1px solid #e0e0e0;
    border-bottom: 1px solid #e0e0e0;
    line-height: 13px;
    font-size: 10.600px;
}
.duration {
    margin-top: 9px;
    display: flex;
    align-items: center;
    justify-content: space-between;
}
.timer-btn {
    width: 24px;
    height: 24px;
    display: flex;
    align-items: center;
    justify-content: center;
    border-top: 2px solid #808080;
    border-left: 2px solid #808080;
    border-right: 1px solid #fff;
    border-bottom: 1px solid #fff;
}
.preview-check {
    margin-top: 11px;
    display: flex;
    align-items: center;
    gap: 6px;
    font-size: 10.500px;
}
.checkbox {
    width: 13px;
    height: 13px;
    background: #fff;
    border-top: 1px solid #808080;
    border-left: 1px solid #808080;
    font-size: 10px;
    line-height: 12px;
    text-align: center;
}
.run-btns {
    margin-top: 118px;
    display: flex;
    gap: 8px;
}
.run-btn {
    width: 46px;
    height: 42px;
    display: flex;
    align-items: center;
    justify-content: center;
    background: #f0f0f0;
    border-top: 1px solid #fff;
    border-left: 1px solid #fff;
    border-right: 2px solid #808080;
    border-bottom: 2px solid #808080;
}
.run-btn-stop {
    width: 45px;
}
.led-row {
    margin-top: 18px;
    height: 16px;
    display: flex;
    align-items: center;
}
.led-lbl {
    width: 57px;
    flex: none;
}
.led-lbl-filter {
    width: 48px;
    margin-left: 15px;
}
.led {
    flex: none;
    width: 12px;
    height: 12px;
    margin: 0 1px;
    border-radius: 50%;
    background: radial-gradient(circle at 40% 35%, #ff5050, #f00 40%, #900 100%);
    border: 1px solid #222;
    box-shadow: 0 0 0 1px #fff, 1px 1px 0 2px #999;
}
.msg-box {
    height: 66px;
    margin-top: 7px;
    border: 1px solid #a8a8a8;
    border-right-color: #fff;
    border-bottom-color: #fff;
}

/* queue panel */
.queue-panel {
    flex: 1;
    display: flex;
    flex-direction: column;
    padding: 10px 11px 0 10px;
    background: #f0f0f0;
    color: #14144a;
}
.queue-list {
    height: 725px;
    flex: none;
    background: #fff;
    border-top: 2px solid #808080;
    border-left: 2px solid #808080;
    border-right: 1px solid #e0e0e0;
    border-bottom: 1px solid #e0e0e0;
}
.queue-head {
    height: 16px;
    display: flex;
    color: #000;
}
.qh {
    flex: none;
    padding: 0 4px;
    line-height: 15px;
    background: #f0f0f0;
    border-right: 1px solid #696969;
    border-bottom: 1px solid #696969;
}
.qh-type {
    width: 41px;
    padding-left: 5px;
}
.qh-idx {
    width: 28px;
}
.qh-time {
    flex: 1;
    text-align: right;
}
.stat {
    height: 26px;
    flex: none;
    display: flex;
    align-items: center;
    justify-content: space-between;
    padding-bottom: 5px;
}
.stat-first {
    margin-top: 4px;
}
.stat-box {
    position: relative;
    top: 3px;
    width: 59px;
    height: 19px;
    padding-right: 5px;
    color: #000;
    line-height: 16px;
    text-align: right;
    background: #fff;
    border-top: 2px solid #808080;
    border-left: 2px solid #808080;
    border-right: 1px solid #e4e4e4;
    border-bottom: 1px solid #e4e4e4;
}
.stat-off {
    background: #f0f0f0;
}
.btn {
    display: flex;
    align-items: center;
    justify-content: center;
    background: #f0f0f0;
    color: #000;
    border-top: 1px solid #fff;
    border-left: 1px solid #fff;
    border-right: 1px solid #696969;
    border-bottom: 1px solid #696969;
    white-space: nowrap;
}
.btn-off {
    color: #a0a0a0;
}
.btn-update {
    align-self: flex-end;
    width: 74px;
    height: 23px;
    margin-top: 45px;
}

/* status bar and task bar */
.statusbar {
    height: 20px;
    flex: none;
    display: flex;
    align-items: flex-end;
    background: #f0f0f0;
}
.st {
    height: 17px;
    padding-left: 2px;
    line-height: 16px;
    font-size: 11.500px;
    border-top: 1px solid #a0a0a0;
    border-left: 1px solid #a0a0a0;
    flex: none;
}
.st-mat {
    width: 224px;
    margin-left: 1378px;
}
.st-pos {
    width: 125px;
    margin-left: 3px;
}
.st-time {
    width: 107px;
    margin-left: 3px;
}
.st-uf {
    width: 19px;
    margin-left: 3px;
}
.st-num {
    width: 33px;
    margin-left: 3px;
}
.st-end {
    width: 19px;
    margin-left: 3px;
}
.taskbar {
    height: 40px;
    flex: none;
    display: flex;
    align-items: center;
    background: #0a0e14;
    color: #fff;
}
.task {
    flex: none;
    height: 40px;
    display: flex;
    align-items: center;
    justify-content: center;
}
.task-plain {
    width: 48px;
}
.task-run {
    width: 40px;
    margin-left: 9px;
    border-bottom: 2px solid #76b9ed;
}
.task-first {
    margin-left: 7px;
}
.task-active {
    width: 48px;
    margin-left: 5px;
    background: #3b3d42;
}
.tray {
    margin-left: auto;
    display: flex;
    align-items: center;
    padding-right: 22px;
    color: #fff;
}
.tray-net {
    margin-left: 10px;
}
.tray-vol {
    margin-left: 8px;
}
.clock {
    margin-left: 10px;
    width: 60px;
    display: flex;
    flex-direction: column;
    align-items: center;
    gap: 5px;
    font-size: 11.500px;
    line-height: 13px;
}
.notif {
    position: relative;
    margin-left: 18px;
}
.notif-count {
    position: absolute;
    left: 8px;
    top: 7px;
    width: 15px;
    height: 15px;
    border-radius: 50%;
    background: #444;
    border: 1px solid #777;
    font-size: 10px;
    font-weight: bold;
    line-height: 13px;
    text-align: center;
}

/* material dialog */
.dialog {
    position: absolute;
    left: 637px;
    top: 339px;
    width: 646px;
    height: 360px;
    background: #f0f0f0;
    border: 1px solid #0078d7;
    box-shadow: 0 0 6px rgba(0, 0, 0, 0.25);
}
.dlg-title {
    height: 25px;
    display: flex;
    align-items: center;
    justify-content: space-between;
    padding: 0 9px 2px 3px;
    background: #fff;
    font-size: 12px;
}
.dlg-top {
    height: 165px;
    display: flex;
    align-items: flex-start;
    padding: 13px 0 0 12px;
}
.dlg-col-fields {
    width: 136px;
    flex: none;
    display: flex;
    flex-direction: column;
}
.f-label {
    height: 12px;
    line-height: 12px;
}
.f-label-nom {
    margin-top: 9px;
}
.f-label-ep {
    margin-top: 6px;
}
.combo-dlg {
    margin-top: 5px;
    margin-bottom: 1px;
    width: 136px;
}
.thick-row {
    margin-top: 3px;
    display: flex;
    align-items: center;
    gap: 24px;
}
.spinner {
    width: 68px;
    height: 24px;
    flex: none;
    display: flex;
    background: #fff;
    border-top: 2px solid #808080;
    border-left: 2px solid #808080;
    border-right: 1px solid #e4e4e4;
    border-bottom: 1px solid #e4e4e4;
}
.spin-val {
    flex: 1;
    text-align: right;
    padding-right: 1px;
    line-height: 18px;
    font-size: 12px;
}
.spin-btns {
    width: 15px;
    flex: none;
    display: flex;
    flex-direction: column;
}
.spin-up, .spin-down {
    position: relative;
    flex: 1;
    background: #f0f0f0;
    border-right: 1px solid #696969;
    border-bottom: 1px solid #696969;
}
.spin-up::after, .spin-down::after {
    content: "";
    position: absolute;
    left: 5px;
    top: 4px;
    border: 2px solid transparent;
}
.spin-up::after {
    border-bottom: 2px solid #000;
    border-top: 0;
}
.spin-down::after {
    border-top: 2px solid #000;
    border-bottom: 0;
}
.dlg-col-btns {
    margin-left: 23px;
    padding-top: 16px;
    width: 66px;
    flex: none;
}
.btn-side {
    height: 20px;
    width: 66px;
    border-bottom-width: 2px;
}
.btn-del {
    margin-top: 27px;
}
.group {
    position: relative;
    border: 1px solid #a8a8a8;
    box-shadow: 1px 1px 0 #fff;
}
.legend {
    position: absolute;
    left: 6px;
    top: -6px;
    padding: 0 2px;
    line-height: 13px;
    background: #f0f0f0;
}
.group-info {
    margin-left: 18px;
    width: 148px;
    height: 85px;
    flex: none;
    padding: 14px 5px 0;
}
.info-box {
    height: 66px;
    background: #fff;
    border-top: 2px solid #808080;
    border-left: 2px solid #808080;
    border-right: 1px solid #e4e4e4;
    border-bottom: 1px solid #e4e4e4;
}
.group-vis {
    margin-left: 59px;
    width: 164px;
    height: 85px;
    flex: none;
    display: flex;
    padding: 9px 0 0 7px;
}
.vis-swatch {
    width: 76px;
    height: 71px;
    flex: none;
    display: flex;
    align-items: center;
    justify-content: center;
    padding-top: 3px;
    background: #ff8040;
    border-top: 2px solid #808080;
    border-left: 2px solid #808080;
    border-right: 1px solid #fff;
    border-bottom: 1px solid #fff;
    font: bold 12px "Liberation Sans", sans-serif;
    letter-spacing: 0.500px;
}
.vis-btns {
    margin-left: 5px;
    padding-top: 11px;
}
.btn-vis {
    width: 66px;
    height: 20px;
    margin-bottom: 6px;
}
.group-config {
    margin-left: 12px;
    width: 619px;
    height: 163px;
    padding: 11px 0 0 8px;
}
.btn-plus {
    width: 60px;
    height: 19px;
    border-bottom-width: 2px;
}
.grid {
    margin-top: 2px;
    width: 603px;
    table-layout: fixed;
    border-collapse: collapse;
    font-size: 11px;
}
.grid th, .grid td {
    height: 18px;
    padding: 0 6px 0 3px;
    overflow: hidden;
    white-space: nowrap;
    font-weight: normal;
}
.grid thead th {
    height: 17px;
    text-align: center;
    padding: 0;
    background: #f0f0f0;
    border-right: 2px solid #555;
    border-bottom: 1px solid #555;
}
.grid td {
    font-size: 11.300px;
    text-align: right;
    background: #fff;
    border-right: 1px solid #cfcfcf;
    border-bottom: 1px solid #cfcfcf;
}
.grid .rh {
    text-align: left;
    padding-left: 2px;
    background: #f0f0f0;
    border-right: 1px solid #555;
    border-bottom: 1px solid #555;
}
.grid .off {
    background: #a0a0a0;
    text-align: left;
    color: #222;
}
.grid .swatch {
    padding: 0;
    text-align: center;
    color: #fff;
}
.grid .sw-black {
    background: #000;
}
.grid .sw-red {
    background: #f00;
}
.grid .sw-blue {
    background: #00f;
    outline: 1px dotted #fff;
    outline-offset: -1px;
}
.grid .sw-steel {
    background: #336699;
}
.sel td {
    background: #0078d7;
    color: #fff;
    border-top: 1px dotted #f0c080;
    border-bottom: 1px dotted #f0c080;
}
.grid .sel .left {
    text-align: left;
}
.c-fix { width: 60px; }
.c-col { width: 43px; }
.c-pow { width: 66px; }
.c-spd { width: 79px; }
.c-ppi { width: 50px; }
.c-pas { width: 68px; }
.c-air { width: 65px; }
.c-cor { width: 59px; }
.c-zof { width: 63px; }
.cfg-bottom {
    margin-top: -2px;
    display: flex;
    align-items: flex-start;
}
.rgb {
    width: 104px;
    flex: none;
    display: grid;
    grid-template-columns: 30px 30px 40px;
    grid-auto-rows: 16px;
    padding: 3px 0 0 2px;
    line-height: 14px;
}
.rgb-val {
    padding-left: 3px;
}
.rgb-b {
    margin-left: -2px;
}
.scrolls {
    width: 145px;
    flex: none;
    display: flex;
    gap: 1px;
}
.hscroll {
    height: 15px;
    display: flex;
    background: repeating-conic-gradient(#fff 0 25%, #e0e0e0 0 50%) 0 0 / 2px 2px;
}
.hscroll-a {
    width: 65px;
}
.hscroll-b {
    width: 79px;
}
.sb-btn, .sb-thumb {
    flex: none;
    position: relative;
    width: 17px;
    background: #f0f0f0;
    border-top: 1px solid #fff;
    border-left: 1px solid #fff;
    border-right: 1px solid #696969;
    border-bottom: 1px solid #696969;
}
.sb-track {
    flex: none;
}
.sb-a1 {
    width: 14px;
}
.sb-b1 {
    width: 27px;
}
.hscroll-b .sb-thumb {
    margin-left: 1px;
}
.sb-btn::after {
    content: "";
    position: absolute;
    left: 5px;
    top: 3px;
    border: 3px solid transparent;
}
.sb-left::after {
    border-right: 3px solid #000;
    border-left: 0;
}
.sb-right::after {
    border-left: 3px solid #000;
    border-right: 0;
}
.dlg-actions {
    margin-left: 87px;
    margin-top: 7px;
    display: flex;
    gap: 25px;
}
.dlg-actions .btn-act {
    width: 65px;
    height: 20px;
    border-bottom-width: 2px;
}
.dlg-actions .btn-act + .btn-act + .btn-act {
    margin-left: -9px;
}
.btn-default {
    outline: 1px solid #555;
    outline-offset: -1px;
}
```
